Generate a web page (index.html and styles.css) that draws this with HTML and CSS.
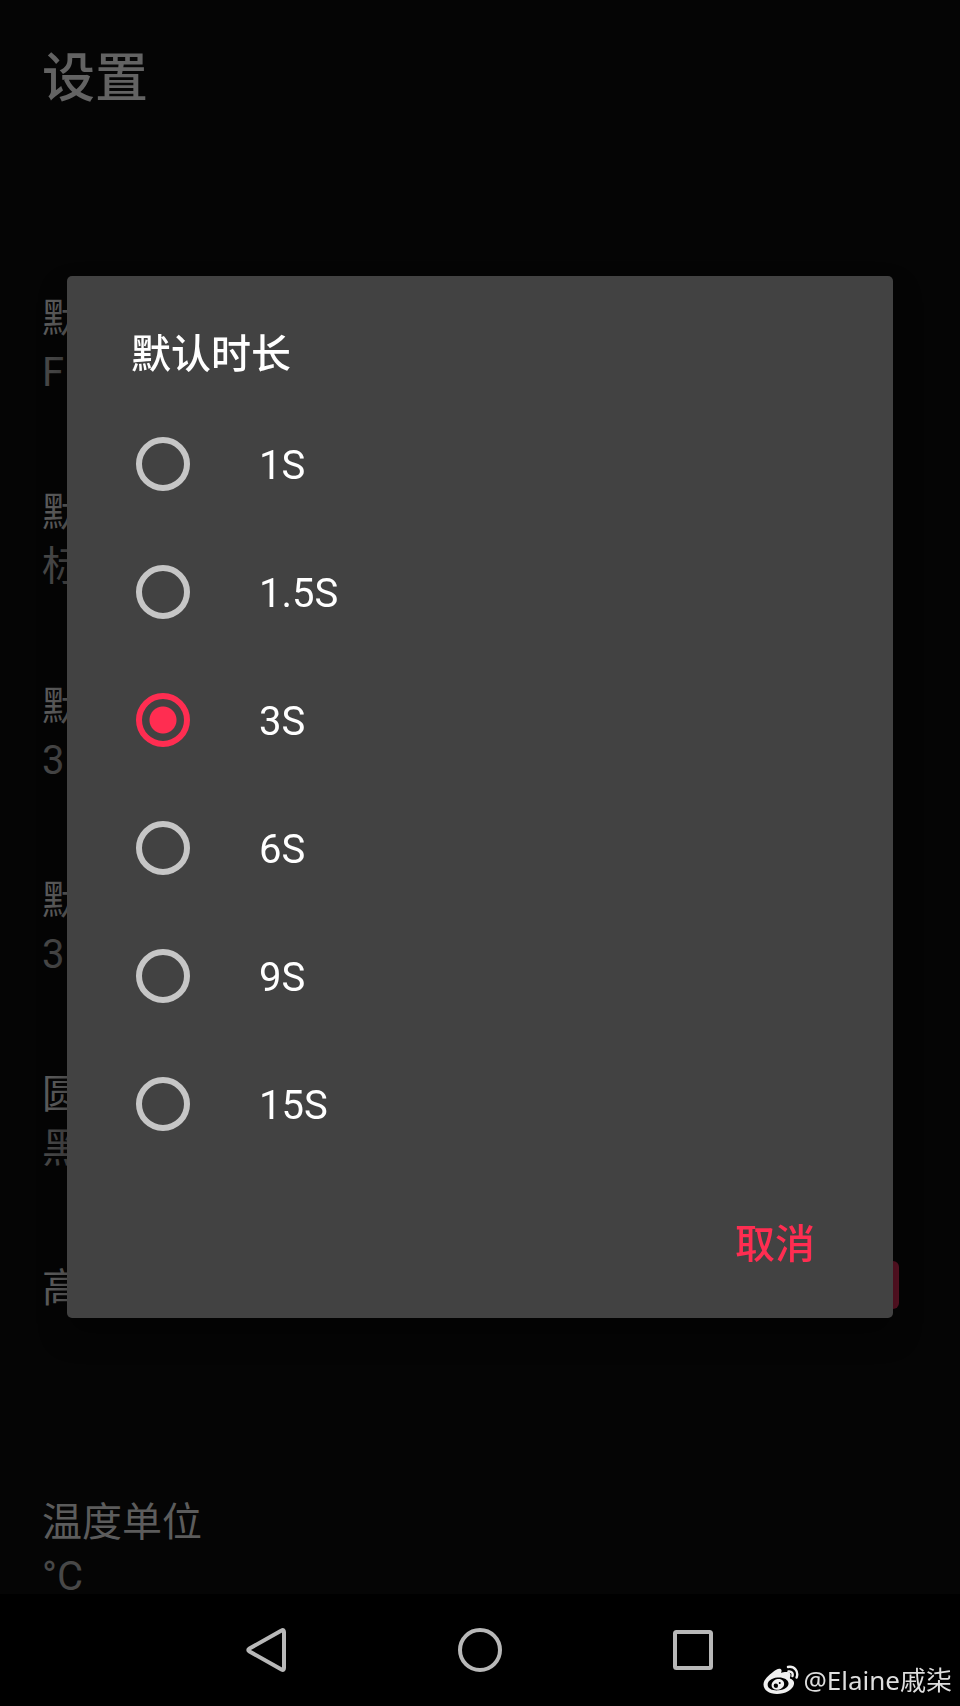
FILE: index.html
```html
<!DOCTYPE html>
<html lang="zh-CN">
<head>
<meta charset="utf-8">
<meta name="viewport" content="width=device-width, initial-scale=1">
<title>设置</title>
<link rel="stylesheet" href="styles.css">
</head>
<body>
<main class="settings">
  <h1 class="settings-title">设置</h1>
  <div class="item"><div class="item-label">默认</div><div class="item-value">F</div></div>
  <div class="item"><div class="item-label">默认</div><div class="item-value">标</div></div>
  <div class="item"><div class="item-label">默认</div><div class="item-value">3</div></div>
  <div class="item"><div class="item-label">默认</div><div class="item-value">3</div></div>
  <div class="item"><div class="item-label">圆</div><div class="item-value">黑</div></div>
  <div class="item item-switch">
    <label class="item-label" for="switch">高</label>
    <input class="switch" id="switch" type="checkbox" checked>
  </div>
  <div class="item"><div class="item-label">温度单位</div><div class="item-value">°C</div></div>
</main>

<div class="overlay">
  <form class="dialog" role="dialog" aria-labelledby="dialog-title">
    <h2 class="dialog-title" id="dialog-title">默认时长</h2>
    <div class="options" role="radiogroup" aria-labelledby="dialog-title">
      <label class="option"><input class="radio" type="radio" name="duration"><span class="option-text">1S</span></label>
      <label class="option"><input class="radio" type="radio" name="duration"><span class="option-text">1.5S</span></label>
      <label class="option"><input class="radio" type="radio" name="duration" checked><span class="option-text">3S</span></label>
      <label class="option"><input class="radio" type="radio" name="duration"><span class="option-text">6S</span></label>
      <label class="option"><input class="radio" type="radio" name="duration"><span class="option-text">9S</span></label>
      <label class="option"><input class="radio" type="radio" name="duration"><span class="option-text">15S</span></label>
    </div>
    <div class="dialog-actions"><button class="cancel" type="button">取消</button></div>
  </form>
</div>

<nav class="navbar">
  <button class="nav-button" type="button" aria-label="返回">
    <svg class="nav-icon" viewBox="0 0 48 48"><path d="M38.500 4.500Q41 3 41 6V42Q41 45 38.500 43.500L6.500 25.500Q4 24 6.500 22.500Z"/></svg>
  </button>
  <button class="nav-button" type="button" aria-label="主页">
    <svg class="nav-icon" viewBox="0 0 48 48"><circle cx="24" cy="24" r="20"/></svg>
  </button>
  <button class="nav-button" type="button" aria-label="最近任务">
    <svg class="nav-icon" viewBox="0 0 48 48"><rect x="6" y="6" width="36" height="36" rx="1.500"/></svg>
  </button>
</nav>

<div class="watermark">
  <svg class="weibo" viewBox="0 0 36 30">
    <path fill="#f0f0f0" fill-rule="evenodd" d="M10 7C13 4 17.500 2.500 18.500 5C18.800 6.500 18 8 18 8C21 7 27 6 27.500 9.500C27.700 11.500 26.500 13 27 13.500C29.500 14.500 31.500 16 31 19C30 25 22 29 14 29C6 29 .5 25 .5 19.500C.5 14.500 6 10 10 7ZM14.500 12.500C8 13 4.300 16.500 4.700 20.200C5.100 23.800 9.500 25.800 15.500 25.300C22 24.700 26 21.500 25.500 18C25.100 14.500 20.500 12 14.500 12.500Z"/>
    <path fill="#f0f0f0" fill-rule="evenodd" d="M14.500 14C18.800 13.500 21.600 16.200 21.100 19.500C20.600 22.800 17 25 13.500 24.800C10 24.500 8 22 8.700 19C9.300 16.500 12 14.300 14.500 14ZM12.800 18.500A2.200 2.200 0 1 0 12.900 22.900A2.200 2.200 0 1 0 12.800 18.500ZM16.700 17A1 1 0 1 0 16.800 19A1 1 0 1 0 16.700 17Z"/>
    <path fill="none" stroke="#f0f0f0" stroke-width="2.400" stroke-linecap="round" d="M25 2C31.500 .8 35.800 6.500 33.600 12.500M25.500 6.500C28.500 6 30.300 8.300 29.500 11"/>
  </svg>
  <span>@Elaine戚柒</span>
</div>
</body>
</html>
```
FILE: styles.css
```css
* {
  box-sizing: border-box;
}

body {
  margin: 0;
  height: 100vh;
  display: grid;
  grid-template-rows: minmax(0, 1fr) 112px;
  background: #000;
  font-family: Roboto, "Noto Sans CJK SC", sans-serif;
  font-size: 40px;
  line-height: 54px;
  overflow: hidden;
}

.settings {
  overflow: hidden;
  padding: 42px 61px 0 42px;
  background: #050505;
}

.settings-title {
  margin: 0 0 166px;
  color: #636363;
  font-size: 53px;
  font-weight: 500;
  line-height: 74px;
}

.item {
  margin-bottom: 86px;
}

.item-label {
  color: #5c5c5c;
  line-height: 74px;
}

.item-value {
  color: #484848;
  line-height: 34px;
}

.item-switch {
  display: flex;
  align-items: center;
  justify-content: space-between;
  margin-bottom: 160px;
}

.switch {
  appearance: none;
  margin: 0 0 8px;
  width: 96px;
  height: 48px;
  border-radius: 6px;
  background: #5c1325;
}

.overlay {
  position: fixed;
  inset: 0 0 112px;
  display: flex;
  align-items: center;
  padding: 0 67px;
}

.dialog {
  flex: 1;
  border-radius: 5px;
  background: #424242;
  color: #fff;
  box-shadow: 0 16px 28px rgba(0, 0, 0, 0.4);
}

.dialog-title {
  margin: 0;
  padding: 52px 64px 18px;
  font-size: 40px;
  font-weight: 500;
  line-height: 54px;
}

.option {
  display: flex;
  align-items: center;
  height: 128px;
  padding: 0 69px;
  gap: 69px;
}

.option-text {
  padding-top: 4px;
}

.radio {
  appearance: none;
  flex: none;
  width: 54px;
  height: 54px;
  margin: 0;
  border: 6px solid #c6c6c6;
  border-radius: 50%;
}

.radio:checked {
  border-color: #ff2d51;
  background: radial-gradient(circle, #ff2d51 13px, transparent 14px);
}

.dialog-actions {
  display: flex;
  justify-content: flex-end;
  padding: 29px 62px 25px;
}

.cancel {
  border: 0;
  padding: 0 16px;
  height: 96px;
  background: none;
  color: #ff2d51;
  font: inherit;
  font-weight: 500;
}

.navbar {
  display: grid;
  grid-template-columns: repeat(3, 1fr);
  padding: 0 16.667%;
}

.nav-button {
  display: flex;
  align-items: center;
  justify-content: center;
  border: 0;
  padding: 0;
  background: none;
}

.nav-icon {
  width: 48px;
  height: 48px;
  fill: none;
  stroke: #b8b8b8;
  stroke-width: 4;
}

.watermark {
  position: fixed;
  right: 8px;
  bottom: 9px;
  display: flex;
  align-items: center;
  gap: 4px;
  color: #dedede;
  font-family: "Noto Sans", "Noto Sans CJK SC", sans-serif;
  font-size: 26px;
  line-height: 34px;
}

.weibo {
  width: 36px;
  height: 30px;
}
```
